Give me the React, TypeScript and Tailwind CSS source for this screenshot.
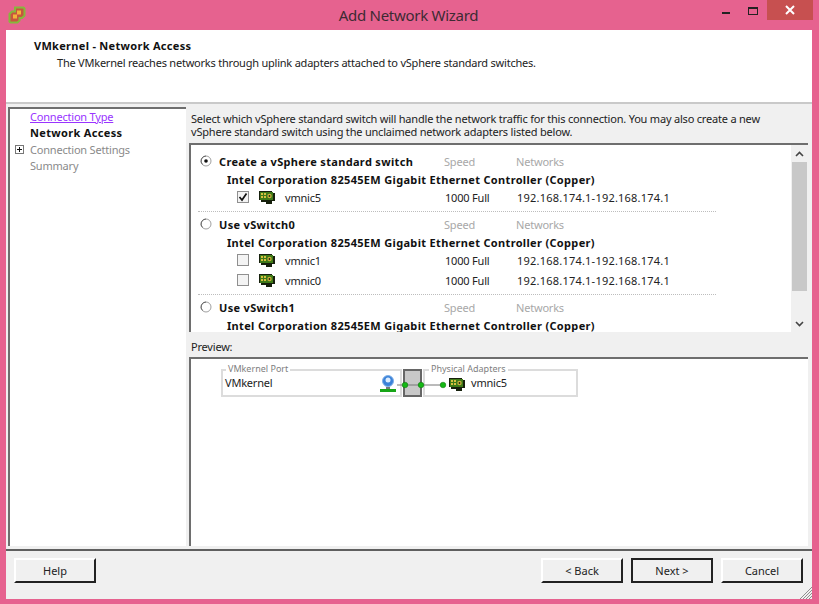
import React from "react";

function Nic() {
  return (
    <svg width="16" height="13" viewBox="0 0 16 13" className="shrink-0">
      <path d="M0 0h13v2h3v8h-3v3h-6v-2H2V9H0z" fill="#16200c" />
      <rect x="1" y="1" width="13" height="8" fill="#3f7a18" />
      <rect x="2" y="2" width="2" height="2" fill="#d8c040" />
      <rect x="5" y="2" width="2" height="2" fill="#d8c040" />
      <rect x="2" y="5" width="2" height="2" fill="#d8c040" />
      <rect x="5" y="5" width="2" height="2" fill="#d8c040" />
      <circle cx="10.5" cy="5" r="2.2" fill="#c9b23c" />
      <circle cx="10.5" cy="5" r="0.9" fill="#2a2a10" />
    </svg>
  );
}

function Radio({ on }: { on?: boolean }) {
  return (
    <svg width="12" height="12" viewBox="0 0 12 12" className="shrink-0">
      <circle cx="6" cy="6" r="5" fill="#fff" stroke="#a0a0a0" />
      <path d="M2.5 9.5A5 5 0 0 1 6 1" fill="none" stroke="#666" />
      {on && <circle cx="6" cy="6" r="1.8" fill="#111" />}
    </svg>
  );
}

function Check({ on }: { on?: boolean }) {
  return (
    <span className="w-[12px] h-[12px] shrink-0 border border-[#8f8f8f] bg-[#f3f3f3] flex items-center justify-center">
      {on && (
        <svg width="10" height="10" viewBox="0 0 10 10">
          <path d="M1.5 5l2.5 3 4.5-6.5" fill="none" stroke="#111" strokeWidth="1.7" />
        </svg>
      )}
    </span>
  );
}

function SwitchHead({ label, on }: { label: string; on?: boolean }) {
  return (
    <div className="h-[18px] flex items-center pl-[9px]">
      <Radio on={on} />
      <span className="ml-[7px] w-[225px] font-bold text-[#111] tracking-[0.33px]">{label}</span>
      <span className="w-[72px] text-[#a8a8a8]">Speed</span>
      <span className="text-[#a8a8a8]">Networks</span>
    </div>
  );
}

function Controller() {
  return (
    <div className="h-[18px] flex items-center pl-[36px] font-bold text-[#111] tracking-[0.33px]">
      Intel Corporation 82545EM Gigabit Ethernet Controller (Copper)
    </div>
  );
}

function Adapter({ name, on, h }: { name: string; on?: boolean; h: string }) {
  return (
    <div className={`flex items-center pl-[46px] text-[#222] ${h}`}>
      <Check on={on} />
      <span className="ml-[10px]"><Nic /></span>
      <span className="ml-[10px] w-[160px]">{name}</span>
      <span className="w-[72px]">1000 Full</span>
      <span className="tracking-[0.22px]">192.168.174.1-192.168.174.1</span>
    </div>
  );
}

function Divider() {
  return <div className="ml-[7px] w-[518px] border-t border-dotted border-[#bdbdbd]" />;
}

function Btn({ label, primary }: { label: string; primary?: boolean }) {
  return (
    <button
      className={`w-[82px] h-[25px] pb-[1px] bg-[#f0f0f0] text-[11px] tracking-[0px] text-[#222] border-2 border-r-[#222] border-b-[#222] ${
        primary ? "border-t-[#222] border-l-[#222]" : "border-t-white border-l-white"
      }`}
    >
      {label}
    </button>
  );
}

export default function App() {
  return (
    <div className="w-[819px] h-[604px] bg-[#e6628f] flex flex-col overflow-hidden font-['Noto_Sans',sans-serif] text-[11px] leading-none tracking-[-0.2px]">
      {/* Title bar */}
      <div className="h-[30px] shrink-0 flex relative">
        <svg width="18" height="18" viewBox="0 0 18 18" className="ml-[8px] mt-[6px]">
          <path d="M7 1.5h8.5l1 1v7l-2.5 2.5h-2.5v2.5l-2 2H2.5l-1-1V8L4 5.5h3z" fill="#c6563f" stroke="#86b83c" strokeWidth="2" />
          <rect x="9" y="4.5" width="4" height="4" fill="#f3b33c" />
          <rect x="5" y="8.5" width="4" height="4" fill="#f3b33c" />
        </svg>
        <div className="absolute left-0 right-[2px] top-[7px] text-center text-[15px] leading-[17px] tracking-[-0.28px] text-[#3d2a33]">Add Network Wizard</div>
        <div className="ml-auto mr-[6px] flex items-start">
          <span className="w-[8px] h-[2px] bg-[#222] mt-[12px] mr-[18px]" />
          <span className="w-[10px] h-[8px] border border-t-2 border-[#222] mt-[7px] mr-[9px]" />
          <span className="w-[46px] h-[20px] bg-[#c75050] flex items-center justify-center">
            <svg width="10" height="10" viewBox="0 0 10 10">
              <path d="M1 1l8 8M9 1L1 9" stroke="#fff" strokeWidth="2" />
            </svg>
          </span>
        </div>
      </div>

      {/* Client */}
      <div className="mx-[6px] w-[806px] h-[569px] bg-[#f0f0f0] flex flex-col relative">
        <div className="h-[72px] shrink-0 bg-white pl-[28px] pt-[10px]">
          <div className="font-bold text-[#111] h-[14px] tracking-[0.3px]">VMkernel - Network Access</div>
          <div className="pl-[23px] mt-[3px] text-[#222] tracking-[-0.22px]">The VMkernel reaches networks through uplink adapters attached to vSphere standard switches.</div>
        </div>
        <div className="h-[2px] shrink-0 bg-[#c9c9c9]" />

        <div className="flex-1 min-h-0 flex pt-[3px] pl-[2px]">
          {/* Steps */}
          <div className="w-[178px] h-[439px] bg-white border-t-2 border-l-2 border-[#6e6e6e] shrink-0">
            <div className="h-[15px] flex items-center pl-[20px] text-[#9933ff] underline">Connection Type</div>
            <div className="h-[17px] flex items-center pl-[20px] font-bold text-[#111] tracking-[0.33px]">Network Access</div>
            <div className="h-[16px] flex items-center pl-[5px] text-[#8a8a8a]">
              <span className="w-[9px] h-[9px] border border-[#777] mr-[6px] relative bg-white">
                <span className="absolute left-[1px] right-[1px] top-[3px] h-px bg-[#111]" />
                <span className="absolute top-[1px] bottom-[1px] left-[3px] w-px bg-[#111]" />
              </span>
              Connection Settings
            </div>
            <div className="h-[17px] flex items-center pl-[20px] text-[#8a8a8a]">Summary</div>
          </div>

          {/* Right */}
          <div className="flex-1 min-w-0 pl-[3px] pr-[4px] flex flex-col">
            <div className="h-[36px] pt-[5px] text-[#222] leading-[13px] pl-[2px]">
              Select which vSphere standard switch will handle the network traffic for this connection. You may also create a new
              <br />
              vSphere standard switch using the unclaimed network adapters listed below.
            </div>
            <div className="h-[189px] shrink-0 bg-white border-t-2 border-l-2 border-[#6e6e6e] flex overflow-hidden">
              <div className="flex-1 min-w-0 pt-[7px] overflow-hidden">
                <SwitchHead label="Create a vSphere standard switch" on />
                <Controller />
                <Adapter name="vmnic5" on h="h-[18px]" />
                <div className="h-[5px]" />
                <Divider />
                <div className="h-[3px]" />
                <SwitchHead label="Use vSwitch0" />
                <Controller />
                <Adapter name="vmnic1" h="h-[18px]" />
                <Adapter name="vmnic0" h="h-[22px]" />
                <div className="h-[3px]" />
                <Divider />
                <div className="h-[3px]" />
                <SwitchHead label="Use vSwitch1" />
                <Controller />
              </div>
              <div className="w-[17px] shrink-0 bg-[#f0f0f0] flex flex-col items-center">
                <div className="h-[17px] shrink-0 flex items-center justify-center">
                  <svg width="9" height="6" viewBox="0 0 9 6"><path d="M1 5l3.5-3.5L8 5" fill="none" stroke="#444" strokeWidth="1.6" /></svg>
                </div>
                <div className="w-[15px] h-[129px] bg-[#c8c8c8] shrink-0" />
                <div className="flex-1" />
                <div className="h-[17px] shrink-0 flex items-center justify-center">
                  <svg width="9" height="6" viewBox="0 0 9 6"><path d="M1 1l3.5 3.5L8 1" fill="none" stroke="#444" strokeWidth="1.6" /></svg>
                </div>
              </div>
            </div>
            <div className="h-[25px] shrink-0 flex items-end pb-[5px] pl-[2px] text-[#222]">Preview:</div>
            <div className="h-[189px] shrink-0 bg-white border-t-2 border-l-2 border-[#6e6e6e] pl-[30px] pt-[10px]">
              <div className="flex relative w-[360px] h-[28px]">
                <div className="w-[181px] h-[28px] shrink-0 border-2 border-[#dcdcdc] relative flex items-center pl-[2px] pb-[1px] text-[#222]">
                  <span className="absolute -top-[8px] left-[3px] bg-white px-[2px] text-[9px] leading-[12px] tracking-[0px] text-[#808080]">VMkernel Port</span>
                  VMkernel
                </div>
                <div className="ml-[1px] w-[19px] h-[28px] shrink-0 bg-[#c8c8c8] border-2 border-[#666]" />
                <div className="ml-[1px] w-[155px] h-[28px] shrink-0 border-2 border-[#dcdcdc] relative flex items-center pl-[46px] pb-[1px] text-[#222]">
                  <span className="absolute -top-[8px] left-[4px] bg-white px-[2px] text-[9px] leading-[12px] tracking-[0px] text-[#808080]">Physical Adapters</span>
                  vmnic5
                </div>
                {/* connection drawing */}
                <svg width="100" height="28" viewBox="0 0 100 28" className="absolute left-[157px] top-0">
                  <circle cx="10" cy="12" r="5.5" fill="#3b82d8" stroke="#7fb0e8" />
                  <circle cx="10" cy="11" r="2.5" fill="#dcecff" />
                  <rect x="8" y="18" width="4" height="2" fill="#777" />
                  <rect x="2" y="20" width="16" height="3" fill="#17a517" />
                  <path d="M19 16h46" stroke="#777" strokeWidth="1" />
                  <circle cx="27" cy="16" r="2.8" fill="#14b814" stroke="#0a6a0a" strokeWidth="0.5" />
                  <circle cx="43" cy="16" r="2.8" fill="#14b814" stroke="#0a6a0a" strokeWidth="0.5" />
                  <circle cx="65" cy="16" r="2.8" fill="#14b814" stroke="#0a6a0a" strokeWidth="0.5" />
                </svg>
                <span className="absolute left-[228px] top-[9px]"><Nic /></span>
              </div>
            </div>
          </div>
        </div>

        <div className="h-[2px] shrink-0 bg-[#5f5f5f] mt-[2px]" />
        <div className="h-[48px] shrink-0 flex items-start pt-[7px] pl-[8px] pr-[9px]">
          <Btn label="Help" />
          <div className="ml-auto flex gap-[8px]">
            <Btn label="< Back" />
            <Btn label="Next >" primary />
            <Btn label="Cancel" />
          </div>
        </div>
        <svg width="13" height="13" viewBox="0 0 13 13" className="absolute right-0 bottom-0">
          <path d="M13 1L1 13M13 4L4 13M13 7L7 13M13 10L10 13" stroke="#8f8f8f" />
        </svg>
      </div>
    </div>
  );
}
